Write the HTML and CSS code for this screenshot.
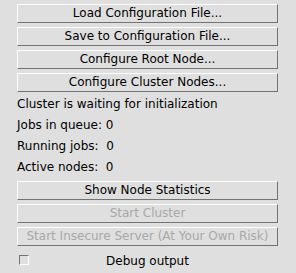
FILE: index.html
```html
<!DOCTYPE html>
<html lang="en">
<head>
    <meta charset="UTF-8">
    <title>Cluster Control</title>
    <link rel="stylesheet" href="styles.css">
</head>
<body>
    <div class="panel">
        <div class="button-group">
            <button class="btn">Load Configuration File...</button>
            <button class="btn">Save to Configuration File...</button>
            <button class="btn">Configure Root Node...</button>
            <button class="btn">Configure Cluster Nodes...</button>
        </div>
        <div class="info">
            <div class="info-row">Cluster is waiting for initialization</div>
            <div class="info-row">Jobs in queue: 0</div>
            <div class="info-row">Running jobs:&nbsp; 0</div>
            <div class="info-row">Active nodes:&nbsp; 0</div>
        </div>
        <div class="button-group">
            <button class="btn">Show Node Statistics</button>
            <button class="btn" disabled>Start Cluster</button>
            <button class="btn" disabled>Start Insecure Server (At Your Own Risk)</button>
        </div>
        <label class="check-row">
            <span class="check"></span>
            <span class="check-label">Debug output</span>
        </label>
    </div>
</body>
</html>
```

FILE: styles.css
```css
:root {
    --face: #dfdfdf;
    --light: #ffffff;
    --shadow: #737373;
    --text: #000;
    --disabled: #a8a8a8;
}
html, body {
    margin: 0;
    padding: 0;
    width: 296px;
    height: 273px;
    background: var(--face);
    color: var(--text);
    font-family: 'DejaVu Sans', sans-serif;
    font-size: 12px;
}
.panel {
    display: flex;
    flex-direction: column;
    padding: 4px 18px 0 17px;
}
.button-group {
    display: flex;
    flex-direction: column;
    gap: 4px;
}
.btn {
    height: 19px;
    padding: 0;
    margin: 0;
    background: var(--face);
    color: var(--text);
    font-family: inherit;
    font-size: 12px;
    line-height: 17px;
    text-align: center;
    border: 1px solid;
    border-color: var(--light) var(--shadow) var(--shadow) var(--light);
    border-radius: 0;
}
.btn:disabled {
    color: var(--disabled);
}
.info {
    display: flex;
    flex-direction: column;
    margin: 2px 0 3px 0;
}
.info-row {
    height: 21px;
    line-height: 21px;
    white-space: pre;
}
.check-row {
    position: relative;
    display: flex;
    justify-content: center;
    align-items: center;
    height: 21px;
    margin-top: 5px;
}
.check {
    position: absolute;
    left: 2px;
    top: 4px;
    width: 8px;
    height: 8px;
    border: 1px solid;
    border-color: var(--shadow) var(--light) var(--light) var(--shadow);
}
.check-label {
    line-height: 21px;
}
```
